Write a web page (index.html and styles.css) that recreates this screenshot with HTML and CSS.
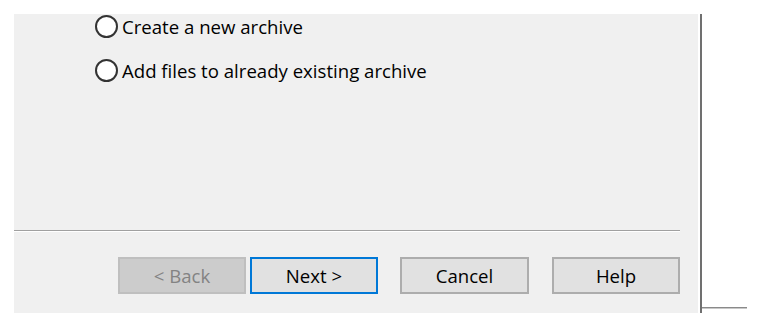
FILE: index.html
```html
<!DOCTYPE html>
<html>
<head>
<meta charset="utf-8">
<link rel="stylesheet" href="styles.css">
</head>
<body>
<div class="frame">
  <div class="panel">
    <div class="options">
      <label class="radio"><span class="circle"></span><span class="label">Create a new archive</span></label>
      <label class="radio"><span class="circle"></span><span class="label">Add files to already existing archive</span></label>
    </div>
    <div class="separator"></div>
    <div class="buttons">
      <button class="btn disabled">&lt; Back</button>
      <button class="btn primary">Next &gt;</button>
      <button class="btn cancel">Cancel</button>
      <button class="btn help">Help</button>
    </div>
  </div>
  <div class="vline"></div>
  <div class="corner"></div>
</div>
</body>
</html>
```

FILE: styles.css
```css
html, body {
  margin: 0;
  padding: 0;
  background: #ffffff;
}
body {
  width: 760px;
  height: 328px;
  overflow: hidden;
  font-family: "Open Sans", "Noto Sans", "DejaVu Sans", sans-serif;
}
.frame {
  display: flex;
  align-items: flex-start;
  padding: 14px 0 0 14px;
}
.panel {
  width: 684px;
  height: 299px;
  background: #f0f0f0;
  display: flex;
  flex-direction: column;
}
.options {
  display: flex;
  flex-direction: column;
  gap: 21px;
  padding: 1px 0 0 81px;
  height: 216px;
  box-sizing: border-box;
}
.radio {
  display: flex;
  align-items: center;
  height: 23px;
  gap: 4px;
}
.circle {
  width: 23px;
  height: 23px;
  box-sizing: border-box;
  border: 2px solid #333333;
  border-radius: 50%;
  background: #ffffff;
  flex: none;
}
.label {
  font-size: 18.6px;
  color: #000000;
}
.separator {
  width: 666px;
  height: 1px;
  background: #a0a0a0;
  border-bottom: 1px solid #ffffff;
}
.buttons {
  display: flex;
  padding: 25px 0 0 104px;
}
.btn {
  width: 128px;
  height: 37px;
  box-sizing: border-box;
  border: 2px solid #adadad;
  background: #e1e1e1;
  font-family: inherit;
  font-size: 18.6px;
  color: #000000;
  padding: 0;
}
.btn.disabled {
  background: #cccccc;
  border-color: #bfbfbf;
  color: #838383;
}
.btn.primary {
  margin-left: 4px;
  border-color: #0078d7;
}
.btn.cancel {
  margin-left: 22px;
  width: 129px;
}
.btn.help {
  margin-left: 23px;
}
.vline {
  width: 2px;
  height: 299px;
  margin-left: 2px;
  background: #707070;
}
.corner {
  width: 45px;
  height: 1px;
  margin-top: 293px;
  background: #8a8a8a;
  border-bottom: 1px solid #c8c8c8;
}
```
